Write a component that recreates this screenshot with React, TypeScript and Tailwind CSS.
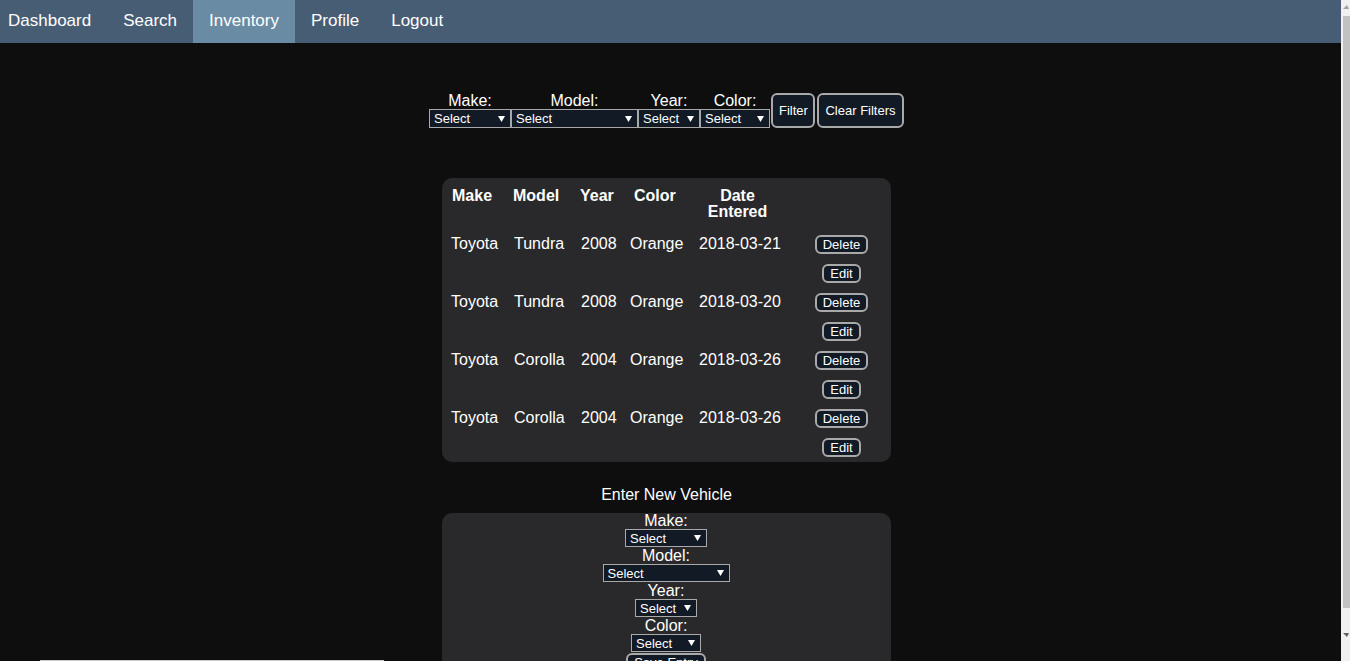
import React from "react";

const Arrow = () => (
  <svg width="7" height="6" viewBox="0 0 7 6" className="shrink-0">
    <polygon points="0,0 7,0 3.5,6" fill="#ffffff" />
  </svg>
);

type SelProps = { className: string };

const FakeSelect = ({ className }: SelProps) => (
  <div
    className={
      "flex items-center justify-between border border-[#a9a9a9] bg-[#121a25] pl-[4px] pr-[5px] text-[13px] leading-[15px] text-white " +
      className
    }
  >
    <span>Select</span>
    <Arrow />
  </div>
);

const Btn = ({ children, className = "" }: { children: React.ReactNode; className?: string }) => (
  <button
    className={
      "border-2 border-[#a9a9a9] rounded-[6px] bg-[#121a25] px-[6px] text-[13px] leading-[15px] text-white " +
      className
    }
  >
    {children}
  </button>
);

const rows = [
  ["Toyota", "Tundra", "2008", "Orange", "2018-03-21"],
  ["Toyota", "Tundra", "2008", "Orange", "2018-03-20"],
  ["Toyota", "Corolla", "2004", "Orange", "2018-03-26"],
  ["Toyota", "Corolla", "2004", "Orange", "2018-03-26"],
];

const cellPad = ["pl-[9px] pr-1", "px-2", "px-2", "px-2", "px-2"];

export default function App() {
  return (
    <div className="relative flex h-[661px] w-full overflow-hidden bg-[#0e0e0e] text-white font-['Liberation_Sans',Arial,sans-serif]">
      <div className="flex min-w-0 flex-1 flex-col">
        <nav className="flex h-[43px] shrink-0 bg-[#475d74] text-[17px] leading-[19px]">
          <a className="pl-[8px] pr-4 pt-[11px]">Dashboard</a>
          <a className="px-4 pt-[11px]">Search</a>
          <a className="bg-[#6a8ba4] px-4 pt-[11px]">Inventory</a>
          <a className="px-4 pt-[11px]">Profile</a>
          <a className="px-4 pt-[11px]">Logout</a>
        </nav>

        <main className="flex flex-col items-center pr-[8px] pt-[50px] text-[16px]">
          <div className="flex items-end">
            <div className="flex flex-col items-center">
              <span className="leading-[16px]">Make:</span>
              <FakeSelect className="h-[19px] w-[82px]" />
            </div>
            <div className="flex flex-col items-center">
              <span className="leading-[16px]">Model:</span>
              <FakeSelect className="h-[19px] w-[127px]" />
            </div>
            <div className="flex flex-col items-center">
              <span className="leading-[16px]">Year:</span>
              <FakeSelect className="h-[19px] w-[62px]" />
            </div>
            <div className="flex flex-col items-center">
              <span className="leading-[16px]">Color:</span>
              <FakeSelect className="h-[19px] w-[70px]" />
            </div>
            <Btn className="ml-px h-[35px] w-[44px] px-0">Filter</Btn>
            <Btn className="ml-[2px] h-[35px] w-[87px] px-0">Clear Filters</Btn>
          </div>

          <div className="mt-[50px] w-[449px] rounded-[10px] bg-[#29292b]">
            <table className="w-full table-fixed border-collapse">
              <colgroup>
                <col className="w-[64px]" />
                <col className="w-[67px]" />
                <col className="w-[49px]" />
                <col className="w-[69px]" />
                <col className="w-[93px]" />
                <col className="w-[107px]" />
              </colgroup>
              <thead>
                <tr className="font-bold leading-4">
                  <th className="whitespace-nowrap pb-[13px] pl-[10px] pt-[10px] text-left align-top">Make</th>
                  <th className="whitespace-nowrap pb-[13px] pl-[7px] pt-[10px] text-left align-top">Model</th>
                  <th className="whitespace-nowrap pb-[13px] pl-[7px] pt-[10px] text-left align-top">Year</th>
                  <th className="whitespace-nowrap pb-[13px] pl-[12px] pt-[10px] text-left align-top">Color</th>
                  <th className="px-2 pb-[13px] pt-[10px] text-center align-top">Date Entered</th>
                  <th className="pb-[13px] pt-[10px]"></th>
                </tr>
              </thead>
              <tbody>
                {rows.map((r, i) => (
                  <tr key={i}>
                    {r.map((c, j) => (
                      <td key={j} className={"whitespace-nowrap pt-[2px] text-left align-top leading-[18px] " + cellPad[j]}>
                        {c}
                      </td>
                    ))}
                    <td className={"pl-[8px] pt-[2px] text-center align-top " + (i === rows.length - 1 ? "pb-[5px]" : "pb-[8px]")}>
                      <div className="flex flex-col items-center">
                        <Btn className="h-[19px]">Delete</Btn>
                        <Btn className="mt-[10px] h-[19px]">Edit</Btn>
                      </div>
                    </td>
                  </tr>
                ))}
              </tbody>
            </table>
          </div>

          <div className="mb-[9px] mt-[24px] h-[18px] leading-[18px]">Enter New Vehicle</div>

          <div className="flex h-[220px] w-[449px] flex-col items-center rounded-t-[10px] bg-[#29292b] pr-px">
            <span className="-mt-px leading-[17px]">Make:</span>
            <FakeSelect className="h-[18px] w-[82px]" />
            <span className="leading-[17px]">Model:</span>
            <FakeSelect className="h-[18px] w-[127px]" />
            <span className="leading-[17px]">Year:</span>
            <FakeSelect className="h-[18px] w-[62px]" />
            <span className="leading-[17px]">Color:</span>
            <FakeSelect className="h-[18px] w-[70px]" />
            <Btn className="mt-px h-[19px]">Save Entry</Btn>
          </div>
        </main>
      </div>

      <div className="flex w-[9px] shrink-0 flex-col bg-[#f0f0f0]">
        <div className="flex h-[14px] items-center justify-end pr-px">
          <svg width="6" height="4" viewBox="0 0 6 4">
            <polygon points="0,4 6,4 4,0" fill="#a0a0a0" />
          </svg>
        </div>
        <div className="ml-[2px] mt-[2px] h-[592px] bg-[#c1c1c1]" />
        <div className="flex flex-1 items-center justify-end pr-px">
          <svg width="6" height="4" viewBox="0 0 6 4">
            <polygon points="0,0 6,0 4,4" fill="#606060" />
          </svg>
        </div>
      </div>

      <div className="absolute bottom-0 left-[40px] h-px w-[344px] bg-[#c8c8c8]" />
    </div>
  );
}
